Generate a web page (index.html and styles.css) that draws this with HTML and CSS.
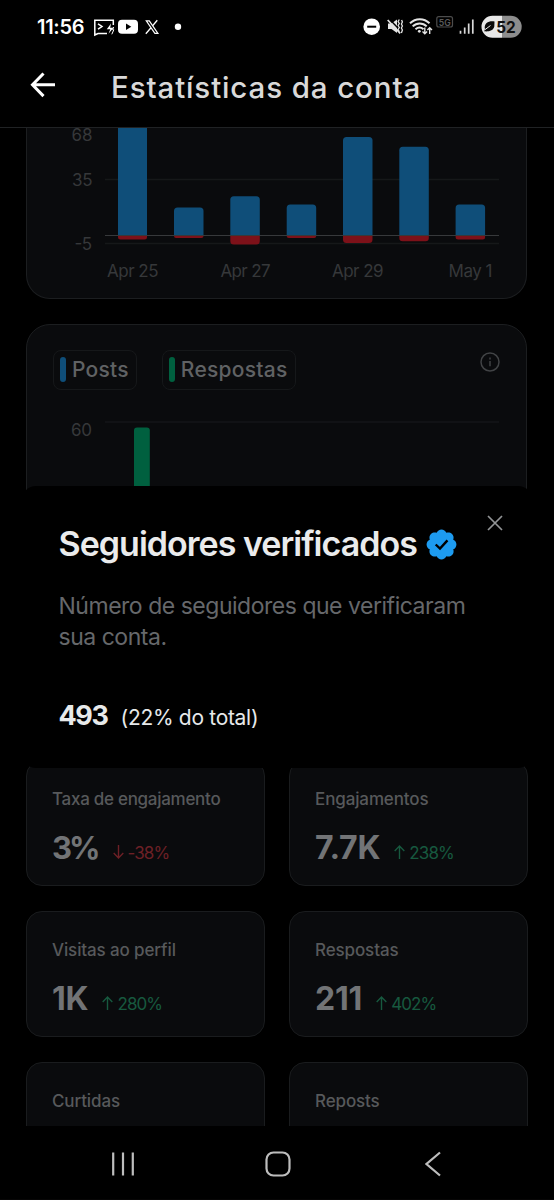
FILE: index.html
```html
<!DOCTYPE html>
<html lang="pt-BR">
<head>
<meta charset="utf-8">
<title>Estatísticas da conta</title>
<link rel="stylesheet" href="styles.css">
</head>
<body>
<div class="phone">
  <div class="status">
    <span class="clock">11:56</span>
    <svg class="status-left" width="92" height="24" viewBox="92 15 92 24" fill="none" stroke="#fff" stroke-width="1.5">
      <path d="M107 33.5H98l-3.2 1.5V20.300h18.5V25M98 23.8l4 2.7-4 2.7"/>
      <path d="M111 23.500l-4.200 5.800h3.500l-1.800 4.500 5-6h-3.300z" fill="#fff" stroke="none"/>
      <path d="M113.600 27l-1 2.800h1.200l-2 4.500" stroke-width="1"/>
      <rect x="118" y="19.800" width="20" height="14" rx="4" fill="#fff" stroke="none"/>
      <path d="M126 23.600v6.400l5.300-3.200z" fill="#000" stroke="none"/>
      <path d="M146.300 20.800h3l8.600 12.500h-3z" stroke-width="1.200"/>
      <path d="M157.300 20.300l-4.700 5.400M151 27.800l-5.200 6" stroke-width="1.300"/>
      <circle cx="178" cy="26.800" r="3.200" fill="#fff" stroke="none"/>
    </svg>
    <svg class="status-right" width="118" height="26" viewBox="361 13 118 26" fill="none" stroke="#e4e4e4" stroke-width="1.700">
      <circle cx="371.700" cy="26.700" r="8.300" fill="#fff" stroke="none"/>
      <path d="M367.200 26.700h9" stroke="#000" stroke-width="2"/>
      <path d="M388 23.600h3.500l5.500-4v13.500l-5.500-4H388z" fill="#e4e4e4" stroke="none"/>
      <path d="M388.800 18.600l12 12.500" stroke="#000" stroke-width="1.500"/>
      <path d="M387.700 20l12.500 13.300" stroke-width="1.700"/>
      <path d="M399.300 19.500l-1.200 2 1.200 2-1.200 2 1.200 2-1.200 2 1.200 2M401.600 20l.8 2-1 2 1 2-1 2 1 2-1 3" stroke-width="1.300"/>
      <path d="M410 23.300c5.500-5.500 14-5.500 19.500 0M412.700 26.400c4-4 10-4 14 0M415.500 29.300c2.500-2.200 5.500-2.200 8 0" stroke-width="2"/>
      <circle cx="419.300" cy="31.300" r="1.400" fill="#e4e4e4" stroke="none"/>
      <path d="M424.800 27.500v6M422.500 31.500l2.300 2.300 2.300-2.300M429.700 34v-6M427.400 30l2.300-2.300 2.300 2.300" stroke-width="1.400"/>
      <rect x="436.800" y="16.700" width="15.700" height="10.300" rx="2" stroke="#4c4c4c" stroke-width="1.200"/>
      <text class="five-g" x="438.700" y="25.500" textLength="12" lengthAdjust="spacingAndGlyphs">5G</text>
      <path d="M460.500 30.800v3M464.700 27.500v6.300M468.700 23.500v10.300M472.800 19.500v14.300" stroke="#d8d8d8" stroke-width="1.700"/>
    </svg>
    <svg class="battery" width="42" height="24" viewBox="481 15 42 24">
      <path d="M492.500 15.800H502v22h-9.500a11 11 0 0 1 0-22z" fill="#e8e8e8"/>
      <path d="M502 15.800h8.700a11 11 0 0 1 0 22H502z" fill="#8d8d8d"/>
      <path d="M494.500 21.500c-6-.8-10 1.500-9.800 7l.5 0-1.200 2.800c4.500.5 9.300-.3 10.300-4.800z" fill="#0a0a0a"/>
      <path d="M484.500 30l6-4.500" stroke="#e8e8e8" stroke-width="1"/>
      <text class="battery-text" x="496.300" y="32.500" textLength="19.500" lengthAdjust="spacingAndGlyphs">52</text>
    </svg>
  </div>

  <header class="header">
    <svg class="back" width="26" height="26" viewBox="0 0 26 26" fill="none" stroke="#fff" stroke-width="3">
      <path d="M13.500 1.500L2.500 12.800l11 11.300M2.500 12.800H25"/>
    </svg>
    <h1 class="heading">Estatísticas da conta</h1>
  </header>

  <main class="content">
    <section class="card card-followers">
      <svg class="chart" width="499" height="169" viewBox="27 128 499 169">
        <path d="M105 179.500h394" stroke="#161819" stroke-width="1.500"/>
        <path d="M105 243.500h394" stroke="#161819" stroke-width="1.500"/>
        <g fill="#0f4e79">
          <path d="M118 128h29v107h-29z"/>
          <path d="M174 235v-24q0-3.500 3.500-3.500h22.500q3.500 0 3.500 3.500v24z"/>
          <path d="M230.300 235v-35.300q0-3.500 3.500-3.500h22.500q3.500 0 3.500 3.500V235z"/>
          <path d="M286.700 235v-27q0-3.500 3.500-3.500h22.500q3.500 0 3.500 3.500v27z"/>
          <path d="M343 235v-94.500q0-3.500 3.500-3.500H369q3.500 0 3.500 3.500V235z"/>
          <path d="M399.300 235v-84.700q0-3.500 3.500-3.500h22.500q3.500 0 3.500 3.500V235z"/>
          <path d="M455.600 235v-27q0-3.500 3.500-3.500h22.500q3.500 0 3.500 3.500v27z"/>
        </g>
        <g fill="#7d1119">
          <path d="M118 236h29v1q0 2.500-2.500 2.500h-24q-2.500 0-2.500-2.500z"/>
          <path d="M174 236h29.500q0 2-2 2H176q-2 0-2-2z"/>
          <path d="M230.300 236h29.500v5q0 3.500-3.500 3.500h-22.500q-3.500 0-3.500-3.500z"/>
          <path d="M286.700 236h29.500q0 2-2 2h-25.500q-2 0-2-2z"/>
          <path d="M343 236h29.500v3.500q0 3.500-3.500 3.500h-22.500q-3.500 0-3.500-3.500z"/>
          <path d="M399.300 236h29.500v2q0 3.200-3.200 3.200h-23q-3.300 0-3.300-3.200z"/>
          <path d="M455.600 236h29.500v1q0 2.500-2.500 2.500h-24.400q-2.600 0-2.600-2.500z"/>
        </g>
        <path d="M105 235.500h394" stroke="#37393b" stroke-width="1.200"/>
        <g class="axis">
          <text x="71.500" y="141" textLength="21">68</text>
          <text x="72" y="186" textLength="20.500">35</text>
          <text x="74.500" y="250" textLength="17.500">-5</text>
          <text x="107" y="277" textLength="51.500">Apr 25</text>
          <text x="220.500" y="277" textLength="50">Apr 27</text>
          <text x="332" y="277" textLength="51.500">Apr 29</text>
          <text x="448.500" y="277" textLength="44">May 1</text>
        </g>
      </svg>
    </section>

    <section class="card card-posts">
      <div class="legend">
        <span class="chip"><i class="swatch swatch-blue"></i><span>Posts</span></span>
        <span class="chip"><i class="swatch swatch-green"></i><span>Respostas</span></span>
        <svg class="info" width="20" height="20" viewBox="0 0 20 20" fill="none" stroke="#414345" stroke-width="1.500">
          <circle cx="10" cy="10" r="9"/><path d="M10 9v5.200M10 5.600v2"/>
        </svg>
      </div>
      <svg class="chart" width="499" height="90" viewBox="27 405 499 90">
        <path d="M105 422h394" stroke="#141618" stroke-width="1.500"/>
        <path d="M134 495v-64.500q0-3 3-3h9.800q3 0 3 3V495z" fill="#00603f"/>
        <g class="axis"><text x="71" y="436" textLength="21">60</text></g>
      </svg>
    </section>

    <section class="stats">
      <article class="stat"><h2 class="long">Taxa de engajamento</h2><div class="row"><b class="tight">3%</b>
        <svg class="arrow down" width="11" height="14" viewBox="0 0 11 14"><path d="M5.500 0v12.800M.7 8l4.800 4.900L10.300 8"/></svg><span class="delta down">-38%</span></div></article>
      <article class="stat"><h2>Engajamentos</h2><div class="row"><b>7.7K</b>
        <svg class="arrow" width="11" height="14" viewBox="0 0 11 14"><path d="M5.500 14V1.200M.7 6l4.800-4.900L10.300 6"/></svg><span class="delta">238%</span></div></article>
      <article class="stat"><h2>Visitas ao perfil</h2><div class="row"><b>1K</b>
        <svg class="arrow" width="11" height="14" viewBox="0 0 11 14"><path d="M5.500 14V1.200M.7 6l4.800-4.900L10.300 6"/></svg><span class="delta">280%</span></div></article>
      <article class="stat"><h2>Respostas</h2><div class="row"><b>211</b>
        <svg class="arrow" width="11" height="14" viewBox="0 0 11 14"><path d="M5.500 14V1.200M.7 6l4.800-4.900L10.300 6"/></svg><span class="delta">402%</span></div></article>
      <article class="stat"><h2>Curtidas</h2></article>
      <article class="stat"><h2>Reposts</h2></article>
    </section>
  </main>

  <nav class="nav">
    <svg width="24" height="24" viewBox="0 0 24 24"><path d="M2.200 .5v23M12 .5v23M21.800 .5v23"/></svg>
    <svg class="home" width="26" height="26" viewBox="0 0 26 26"><rect x="1.500" y="1.500" width="23" height="23" rx="7"/></svg>
    <svg width="16" height="26" viewBox="0 0 16 26"><path d="M15 1.500L1.500 13 15 24.500"/></svg>
  </nav>

  <aside class="sheet">
    <svg class="close" width="16" height="16" viewBox="0 0 16 16" fill="none" stroke="#929496" stroke-width="1.700"><path d="M1 1l14 14M15 1L1 15"/></svg>
    <h2 class="sheet-title"><span>Seguidores verificados</span>
      <svg class="badge" width="31" height="31" viewBox="1.400 1.750 19.500 19.500"><path fill="#1d9bf0" d="M20.396 11c-.018-.646-.215-1.275-.57-1.816-.354-.54-.852-.972-1.438-1.246.223-.607.270-1.264.140-1.897-.131-.634-.437-1.218-.882-1.687-.470-.445-1.053-.750-1.687-.882-.633-.130-1.290-.083-1.897.140-.273-.587-.704-1.086-1.245-1.440S11.647 1.620 11 1.604c-.646.017-1.273.213-1.813.568s-.969.854-1.240 1.440c-.608-.223-1.267-.272-1.902-.140-.635.130-1.220.436-1.690.882-.445.470-.749 1.055-.878 1.688-.130.633-.080 1.290.144 1.896-.587.274-1.087.705-1.443 1.245-.356.540-.555 1.170-.574 1.817.020.647.218 1.276.574 1.817.356.540.856.972 1.443 1.245-.224.606-.274 1.263-.144 1.896.130.634.433 1.218.877 1.688.470.443 1.054.747 1.687.878.633.132 1.290.084 1.897-.136.274.586.705 1.084 1.246 1.439.540.354 1.170.551 1.816.569.647-.016 1.276-.213 1.817-.567s.972-.854 1.245-1.440c.604.239 1.266.296 1.903.164.636-.132 1.220-.447 1.680-.907.460-.460.776-1.044.908-1.681s.075-1.299-.165-1.903c.586-.274 1.084-.705 1.439-1.246.354-.540.551-1.170.569-1.816z" transform="translate(.15 .5)"/><path fill="none" stroke="#000" stroke-width="1.500" d="M7.500 11.500l2.700 2.600 4.700-5.200"/></svg>
    </h2>
    <p class="sheet-text"><span>Número de seguidores que verificaram</span><br><span>sua conta.</span></p>
    <p class="sheet-total"><b>493</b><span>(22% do total)</span></p>
  </aside>
</div>
</body>
</html>
```
FILE: styles.css
```css
* { box-sizing: border-box; }
body { margin: 0; background: #000; font-family: Inter, Roboto, sans-serif; }
h1, h2, p { margin: 0; }
svg { display: block; flex: none; }
.phone { position: relative; width: 554px; height: 1200px; overflow: hidden; background: #000; display: flex; flex-direction: column; }

.status { height: 53px; display: flex; align-items: flex-start; padding: 15px 31px 0 37px; }
.clock { width: 55px; line-height: 24px; font-size: 20px; font-weight: 600; color: #fff; letter-spacing: -.3px; white-space: nowrap; }
.status-left { margin-right: auto; }
.status-right { margin: -2px 2px 0 0; }
.five-g { font: 600 9px Inter, sans-serif; fill: #5a5a5a; stroke: none; }
.battery-text { font: 700 16px Inter, sans-serif; fill: #101010; }

.header { height: 75px; flex: none; border-bottom: 1px solid #202224; display: flex; align-items: center; padding: 0 30px 7px; }
.back { margin: -3px 55px 0 0; }
.heading { font-size: 29.5px; font-weight: 500; line-height: 36px; color: #d9d9d9; letter-spacing: .88px; white-space: nowrap; }

.content { height: 998px; flex: none; overflow: hidden; padding: 0 27px 0 26px; }
.card { border: 1px solid #1c1e20; border-radius: 24px; background: #0a0b0d; overflow: hidden; }
.card-followers { height: 171px; border-top: 0; border-radius: 0 0 24px 24px; }
.card-posts { margin-top: 25px; height: 411px; }
.axis { font: 400 17px Inter, sans-serif; fill: #36383a; }
.legend { height: 80px; padding: 25px 26px 0; display: flex; align-items: flex-start; gap: 25px; }
.chip { height: 40px; border: 1px solid #16181a; border-radius: 8px; display: flex; align-items: center; gap: 6px; padding: 0 7px 1px 6px; font-size: 21px; font-weight: 500; letter-spacing: .25px; color: #606264; }
.swatch { width: 6px; height: 25px; border-radius: 3px; }
.swatch-blue { background: #0f4e79; }
.swatch-green { background: #00603f; }
.info { margin: 2px 0 0 auto; }

.stats { margin-top: 25px; display: grid; grid-template-columns: 239px 239px; gap: 25px 24px; }
.stat { height: 126px; border: 1px solid #1a1c1e; border-radius: 16px; background: #0a0b0d; padding: 26px 25px 0; }
.stat h2 { font-size: 17px; line-height: 24px; font-weight: 500; color: #57595b; letter-spacing: -.12px; white-space: nowrap; }
.stat .long { letter-spacing: -.28px; }
.row { display: flex; align-items: baseline; margin-top: 17px; line-height: 40px; }
.row b { font-size: 32px; font-weight: 700; color: #727476; letter-spacing: -.2px; margin-right: 14px; }
.row .tight { font-size: 31px; letter-spacing: -3px; margin-right: 15px; }
.arrow { fill: none; stroke: #17593f; stroke-width: 1.4; margin-right: 4px; }
.arrow.down { stroke: #6d2026; }
.delta { font-size: 17px; color: #17593f; letter-spacing: -.9px; }
.delta.down { color: #6d2026; }

.nav { height: 74px; display: flex; justify-content: space-between; align-items: center; padding: 3px 113px 0 111px; border-bottom: 1px solid #070606; }
.nav svg { fill: none; stroke: #bdbdbd; stroke-width: 2.2; }
.nav .home { margin-right: 4px; }

/* Popover over the dimmed dashboard */
.sheet { position: absolute; left: 22px; top: 486px; width: 510px; height: 282px; background: #000; border-radius: 14px; padding: 37px 36px 0 36.5px; }
.close { position: absolute; left: 465px; top: 29px; }
.sheet-title { display: flex; align-items: center; gap: 9px; height: 42px; font-size: 34px; font-weight: 600; line-height: 42px; color: #eaebec; letter-spacing: -.98px; white-space: nowrap; }
.sheet-text { margin-top: 26px; font-size: 23px; line-height: 31px; letter-spacing: -.48px; color: #66686b; white-space: nowrap; }
.sheet-total { margin-top: 45px; display: flex; align-items: baseline; gap: 13px; line-height: 36px; font-size: 21px; letter-spacing: -.3px; color: #e7e9ea; white-space: nowrap; }
.sheet-total b { font-size: 27px; font-weight: 700; letter-spacing: -1.4px; }
```
